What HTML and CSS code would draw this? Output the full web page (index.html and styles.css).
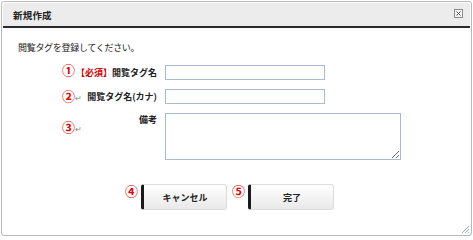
FILE: index.html
```html
<!DOCTYPE html>
<html lang="ja">
  <head>
    <meta charset="UTF-8" />
    <meta name="viewport" content="width=device-width, initial-scale=1.0" />
    <title>新規作成</title>
    <link rel="stylesheet" href="styles.css">
  </head>
  <body>
    <div class="dialog">
      <div class="dialog-head">
        <span class="dialog-title">新規作成</span>
        <span class="close-btn">
          <svg width="9" height="9" viewBox="0 0 9 9">
            <rect x="0.5" y="0.5" width="8" height="8" fill="#f4f4f4" stroke="#8a8a8a"/>
            <path d="M2.5 2.5 L6.5 6.5 M6.5 2.5 L2.5 6.5" stroke="#555" stroke-width="1"/>
          </svg>
        </span>
      </div>
      <div class="dialog-body">
        <p class="lead">閲覧タグを登録してください。</p>
        <div class="form">
          <span class="mark mark-up">①</span>
          <label class="label"><span class="req">【必須】</span>閲覧タグ名</label>
          <input class="field" type="text">

          <span class="mark">②<i class="ret">↵</i></span>
          <label class="label">閲覧タグ名(カナ)</label>
          <input class="field" type="text">

          <span class="mark mark-mid">③<i class="ret">↵</i></span>
          <label class="label label-top">備考</label>
          <textarea class="memo"></textarea>
        </div>
        <div class="actions">
          <span class="mark">④</span>
          <button class="btn">キャンセル</button>
          <span class="mark mark-gap">⑤</span>
          <button class="btn">完了</button>
        </div>
      </div>
      <span class="grip">
        <svg width="9" height="9" viewBox="0 0 9 9">
          <path d="M8 1 L1 8 M8 4 L4 8 M8 7 L7 8" stroke="#8fb0de" stroke-width="1"/>
        </svg>
      </span>
    </div>
  </body>
</html>
```

FILE: styles.css
```css
body {
  margin: 0;
  font-family: "Noto Sans CJK JP", "Noto Sans", sans-serif;
  font-size: 10px;
  color: #222;
  background: #fff;
}

.dialog {
  position: relative;
  margin: 1px;
  width: 469px;
  height: 233px;
  border: 1px solid #b9b9b9;
  border-radius: 3px;
}

.dialog-head {
  margin: 1px;
  height: 23px;
  background: #ececec;
  border-bottom: 2px solid #2a2a2a;
  border-radius: 3px 3px 0 0;
  display: flex;
  align-items: center;
  justify-content: space-between;
  padding: 0 7px 0 10px;
}
.dialog-title {
  font-weight: bold;
  font-size: 9.5px;
  letter-spacing: 0.2px;
}
.close-btn {
  display: flex;
  margin-top: -3px;
}

.dialog-body {
  padding: 12px 0 0 16px;
}
.lead {
  margin: 0;
  line-height: 13px;
  font-size: 9px;
  letter-spacing: -0.3px;
}

.form {
  display: grid;
  grid-template-columns: 12px 91px auto;
  row-gap: 9px;
  margin: 11px 0 0 44px;
  align-items: center;
}
.mark {
  color: #e00000;
  font-size: 13px;
  font-weight: bold;
  line-height: 12px;
  white-space: nowrap;
}
.mark .ret {
  font-style: normal;
  font-weight: normal;
  color: #888;
  font-size: 8px;
}
.mark-up {
  margin-top: -5px;
}
.mark-mid {
  margin-bottom: 18px;
}
.label {
  justify-self: end;
  font-weight: bold;
  font-size: 9px;
  margin-right: 8px;
  white-space: nowrap;
}
.label-top {
  align-self: start;
}
.req {
  color: #d00000;
}
.field {
  width: 160px;
  height: 15px;
  box-sizing: border-box;
  border: 1px solid #a7bcd3;
  margin: 0;
  padding: 0 2px;
}
.memo {
  width: 236px;
  height: 47px;
  box-sizing: border-box;
  border: 1px solid #a7bcd3;
  margin: 0;
  resize: both;
}

.actions {
  display: flex;
  align-items: flex-start;
  margin: 24px 0 0 107px;
}
.actions .mark {
  margin-top: 1px;
  width: 16px;
}
.mark-gap {
  margin-left: 5px;
}
.btn {
  width: 86px;
  height: 26px;
  border: 1px solid #dcdcdc;
  border-left: 3px solid #1a1a1a;
  border-radius: 3px;
  background: linear-gradient(#ffffff, #e9e9e9);
  font-family: "Noto Sans CJK JP", sans-serif;
  font-weight: bold;
  font-size: 9px;
  color: #222;
  padding: 0;
}

.grip {
  position: absolute;
  right: 1px;
  bottom: 1px;
  display: flex;
}
```
